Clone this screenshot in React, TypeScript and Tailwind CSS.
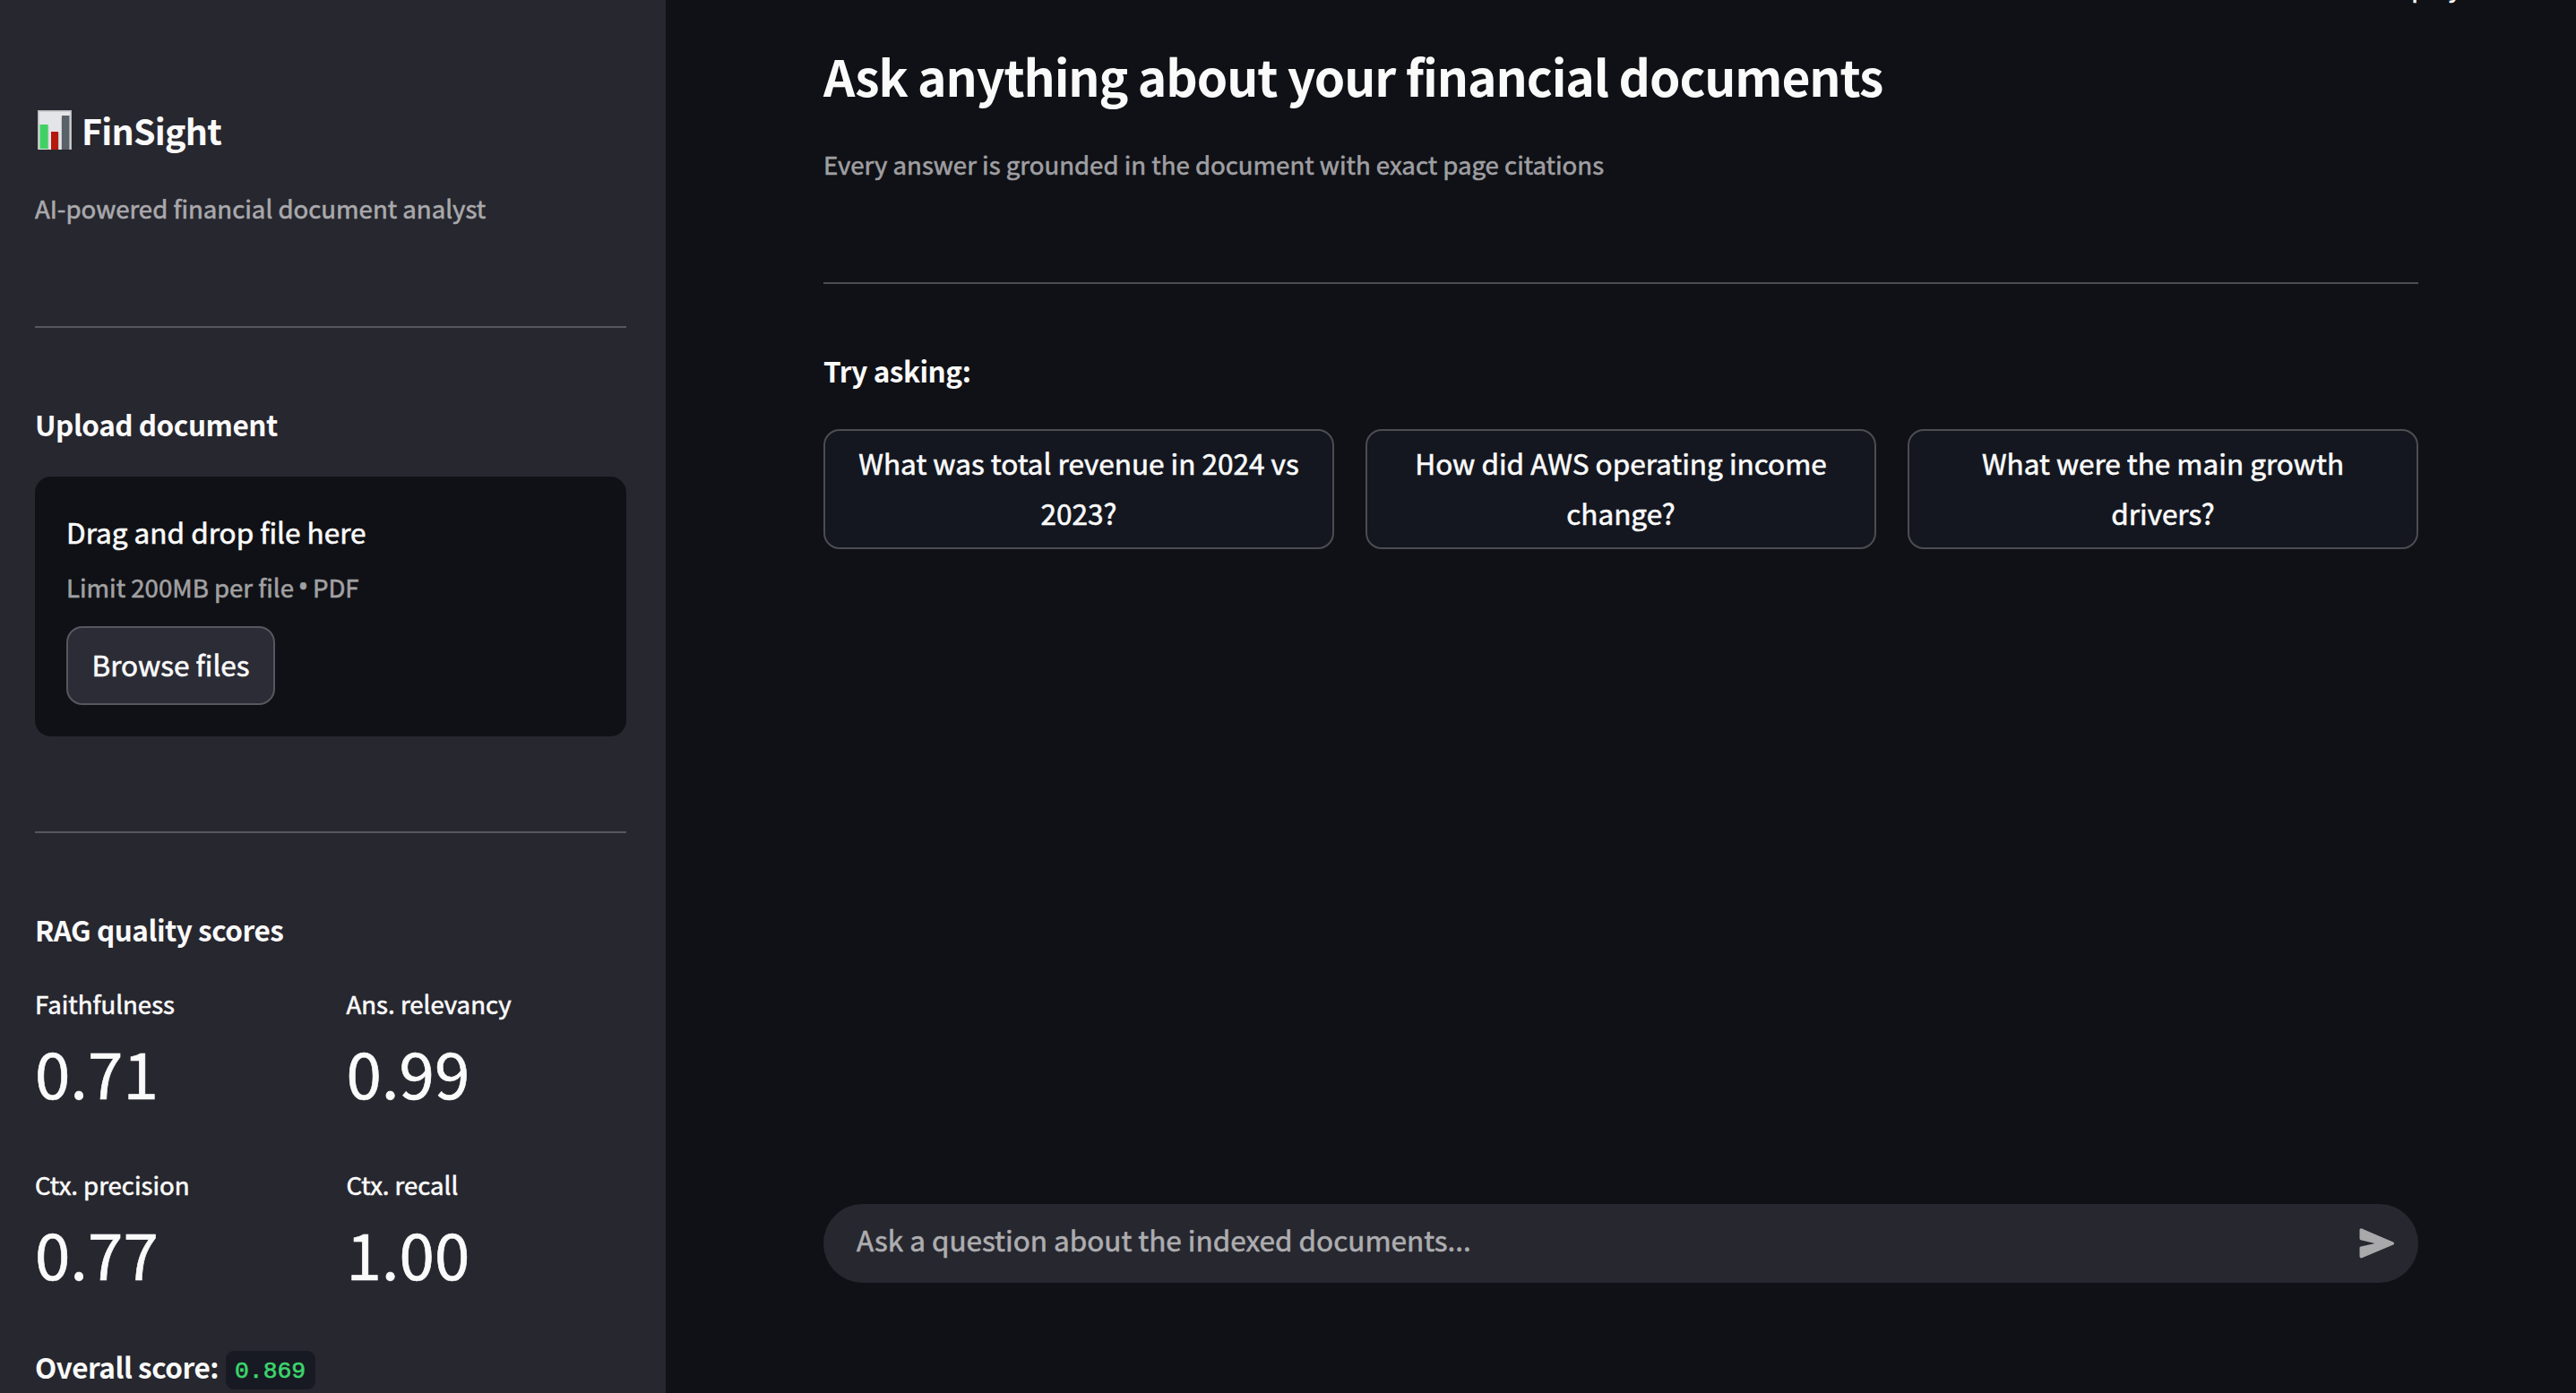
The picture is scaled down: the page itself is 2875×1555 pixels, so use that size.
const metrics = [
  { label: "Faithfulness", value: "0.71" },
  { label: "Ans. relevancy", value: "0.99" },
  { label: "Ctx. precision", value: "0.77" },
  { label: "Ctx. recall", value: "1.00" },
]

const suggestions = [
  "What was total revenue in 2024 vs 2023?",
  "How did AWS operating income change?",
  "What were the main growth drivers?",
]

function ChartIcon() {
  return (
    <svg className="mt-[4px] ml-[3px] h-[44px] w-[38px] shrink-0" viewBox="0 0 38 44">
      <rect width="38" height="44" fill="#b4b6b9" />
      <rect x="1.5" y="1.5" width="35" height="42.5" fill="#e3e5e8" />
      <path d="M11.5 17V44M23.5 25V44M27 8V44" stroke="#c3c5c8" strokeWidth="1.5" />
      <rect x="2.5" y="16" width="9" height="27" fill="#40d163" />
      <rect x="15" y="24" width="8" height="20" fill="#b5190b" />
      <rect x="27" y="6" width="8.5" height="38" fill="#5b6169" />
    </svg>
  )
}

function SendIcon() {
  return (
    <svg className="h-[34px] w-[40px]" viewBox="0 0 40 34" fill="#a9a9ab">
      <path d="M0.5 2.2C0.5 0.9 1.8 0 3 0.5L38 15.4C39.4 16 39.4 17.9 38 18.5L3 33.3C1.8 33.8 0.5 32.9 0.5 31.6V22.2C0.5 21.4 1 20.7 1.8 20.5L17.5 16.9L1.8 13.3C1 13.1 0.5 12.4 0.5 11.6Z" />
    </svg>
  )
}

function Metric({ label, value }: { label: string; value: string }) {
  return (
    <div className="flex flex-col gap-[4px]">
      <div className="text-[27.6px] leading-[44px]">{label}</div>
      <div className="text-[70.9px] leading-[100px]">{value}</div>
    </div>
  )
}

function SectionTitle({ children }: { children: string }) {
  return (
    <p className="text-[31.5px] leading-[56px] font-semibold tracking-[-0.015em] [-webkit-text-stroke:0]">{children}</p>
  )
}

function Sidebar() {
  return (
    <aside className="flex w-[743px] shrink-0 flex-col bg-[#27272f] pt-[119px] pr-[44px] pl-[39px]">
      <div className="flex">
        <ChartIcon />
        <h2 className="ml-[11px] text-[39.4px] leading-[52px] font-semibold tracking-[-0.019em] [-webkit-text-stroke:0]">
          FinSight
        </h2>
      </div>
      <p className="mt-[36px] text-[27.6px] leading-[50px] text-[#a9a9ac]">AI-powered financial document analyst</p>
      <hr className="mt-[107px] mb-[79px] border-t-2 border-[#55585f]" />

      <SectionTitle>Upload document</SectionTitle>
      <div className="mt-[31px] flex h-[290px] flex-col items-start rounded-[18px] bg-[#101116] px-[35px] pt-[33px]">
        <div className="text-[31.5px] leading-[56px]">Drag and drop file here</div>
        <div className="mt-[12px] flex gap-[5px] text-[27.6px] leading-[44px] text-[#a0a0a2]">
          <span>Limit 200MB per file</span>
          <span className="flex w-[11px] justify-center font-['Noto_Sans',sans-serif] text-[30px]">•</span>
          <span>PDF</span>
        </div>
        <button className="mt-[22px] h-[88px] w-[233px] rounded-[18px] border-2 border-[#55585f] bg-[#2b2c36] pb-[5px] text-[31.5px] leading-[56px]">
          Browse files
        </button>
      </div>
      <hr className="mt-[106px] mb-[79px] border-t-2 border-[#55585f]" />

      <SectionTitle>RAG quality scores</SectionTitle>
      <div className="mt-[33px] grid grid-cols-2 gap-x-[35px] gap-y-[54px]">
        {metrics.map((m) => (
          <Metric key={m.label} label={m.label} value={m.value} />
        ))}
      </div>
      <div className="mt-[49px] flex items-start gap-[8px]">
        <SectionTitle>Overall score:</SectionTitle>
        <code className="mt-[11px] flex h-[43px] w-[100px] items-center justify-center rounded-[9px] bg-[#171a23] pt-[4px] pr-[1px] font-['Liberation_Mono',monospace] text-[26.4px] leading-[39px] text-[#3dd56d]">
          0.869
        </code>
      </div>
    </aside>
  )
}

export default function App() {
  return (
    <div className="relative flex h-[1555px] w-[2875px] overflow-hidden bg-[#101116] font-['Noto_Sans_CJK_SC',sans-serif] text-[#fafafa] [-webkit-text-stroke:0.6px]">
      <Sidebar />
      <main className="flex flex-1 flex-col px-[176px]">
        <h1 className="mt-[47px] text-[55.1px] leading-[74px] font-semibold tracking-[-0.0195em] whitespace-nowrap [-webkit-text-stroke:0]">
          Ask anything about your financial documents
        </h1>
        <p className="mt-[37px] text-[27.6px] leading-[50px] text-[#9f9fa2]">
          Every answer is grounded in the document with exact page citations
        </p>
        <hr className="mt-[107px] mb-[68px] border-t-2 border-[#4c4d51]" />
        <SectionTitle>Try asking:</SectionTitle>
        <div className="mt-[38px] grid grid-cols-3 gap-[35px]">
          {suggestions.map((s) => (
            <button
              key={s}
              className="h-[134px] rounded-[18px] border-2 border-[#4c4d51] bg-[#141720] px-[26px] pb-[4px] text-[31.5px] leading-[56px]"
            >
              {s}
            </button>
          ))}
        </div>
        <div className="mt-auto mb-[123px] flex h-[88px] items-center justify-between rounded-full bg-[#27272f] pr-[26px] pl-[37px]">
          <span className="pb-[10px] text-[31.5px] leading-[56px] text-[#adadb0]">
            Ask a question about the indexed documents...
          </span>
          <SendIcon />
        </div>
      </main>
      {/* toolbar button, scrolled almost out of view */}
      <div className="absolute top-[-37px] left-[2657px] text-[27.6px] leading-[44px]">Deploy</div>
    </div>
  )
}
